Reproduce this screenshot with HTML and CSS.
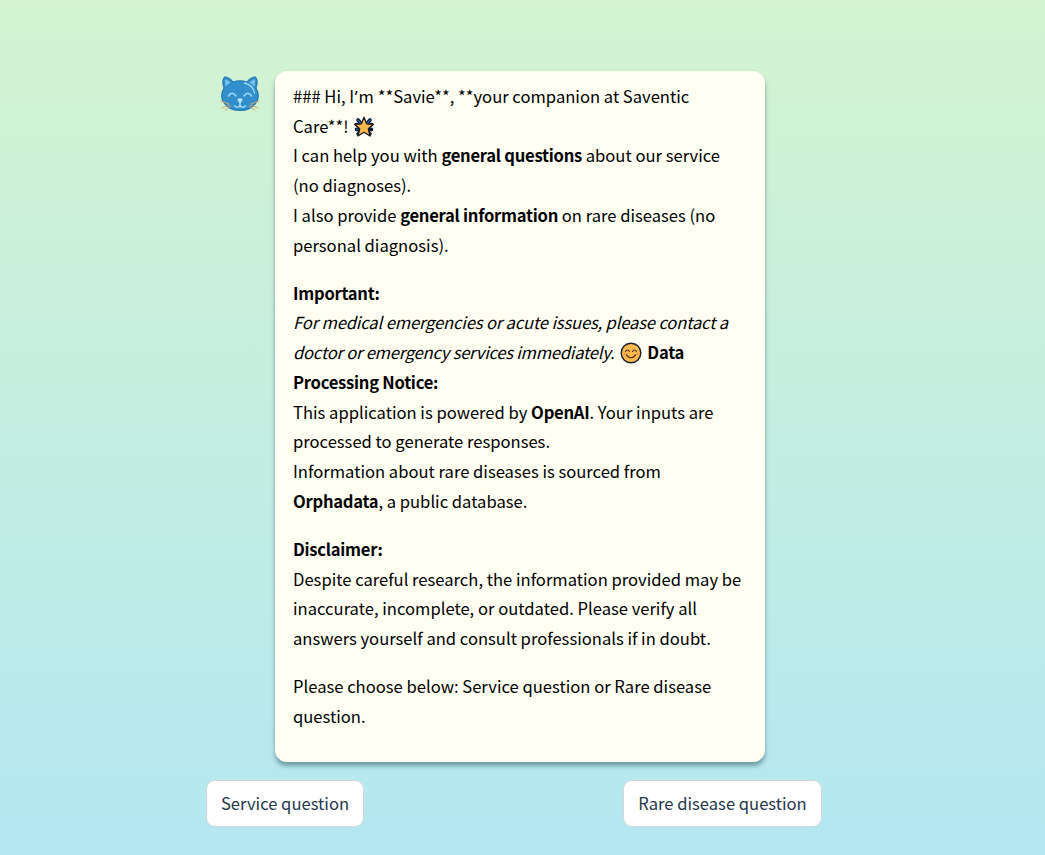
FILE: index.html
```html
<!DOCTYPE html>
<html lang="en">
<head>
<meta charset="utf-8">
<title>Savie – Saventic Care</title>
<link rel="stylesheet" href="styles.css">
</head>
<body>
<main class="chat">
  <div class="message">
    <svg class="avatar" viewBox="0 0 40 38" aria-hidden="true">
      <path d="M4 13Q2 8 3.500 4Q4.500 1 7.500 2.500Q11 4 13 7Q20 4.500 27 7Q29 4 32.500 2.500Q35.500 1 36.500 4Q38 8 36 13Q40 20 37 26Q32 35.500 20 35.500Q8 35.500 3 26Q0 20 4 13Z" fill="#318fcc" stroke="#2679b3" stroke-width="1.2"/>
      <path d="M5 5.500Q5 4 7 5Q9 6 10.500 7.500Q7 9.500 5.500 12ZM35 5.500Q35 4 33 5Q31 6 29.500 7.500Q33 9.500 34.500 12Z" fill="#79c3e8"/>
      <path d="M24.500 8Q33 10 34.500 18" fill="none" stroke="#a5dcf6" stroke-width="1.3" stroke-linecap="round"/>
      <path d="M8.500 21Q12 15.500 16 21M24 21Q28 15.500 31.500 21M14.500 31Q18 33.500 20 30.500Q22 33.500 25.500 31M20 26V30" fill="none" stroke="#a5dcf6" stroke-width="1.5" stroke-linecap="round"/>
      <path d="M18.500 24.500H21.500L20 27Z" fill="#c0e7fa" stroke="#c0e7fa" stroke-width="2" stroke-linejoin="round"/>
      <path d="M1 26 9 29M2 33 9.500 30M5 35.500 10.500 31.500M39 26 31 29M38 33 30.500 30M35 35.500 29.500 31.500" fill="none" stroke="#d3a86d" stroke-width="1" stroke-linecap="round"/>
    </svg>
    <article class="bubble">
      <p>### Hi, I<span class="apostrophe">’</span>m **Savie**, **your companion at Saventic<br>Care**! <svg class="star" viewBox="0 0 22 22" aria-hidden="true"><path d="M5 4 17 18M17 4 5 18M3.500 13.500 18.500 8.500M3.500 8.500 18.500 13.500" stroke="#071d36" stroke-width="3.600" stroke-linecap="round"/><path d="M5 4 17 18M17 4 5 18M3.500 13.500 18.500 8.500" stroke="#2b659c" stroke-width="1.200" stroke-linecap="round"/><path d="M11 1.200 13.600 7.800 20.500 8.300 15.300 12.800 17 20 11 16.300 5 20 6.700 12.800 1.500 8.300 8.400 7.800Z" fill="#ffb84d" stroke="#1b1820" stroke-width="1.300" stroke-linejoin="round"/></svg><br>I can help you with <b>general questions</b> about our service<br>(no diagnoses).<br>I also provide <b>general information</b> on rare diseases (no<br>personal diagnosis).</p>
      <p><b>Important:</b><br><em>For medical emergencies or acute issues, please contact a<br><span class="tight">doctor or emergency services immediately.</span></em> <svg class="smile" viewBox="0 0 22 22" aria-hidden="true"><circle cx="11" cy="11" r="9.800" fill="#ffb950" stroke="#18202b" stroke-width="1.400"/><path d="M5.500 9.500Q7.500 6.500 9.500 9.500M12.500 9.500Q14.500 6.500 16.500 9.500M6.500 13Q11 18.500 15.500 13" fill="none" stroke="#4d2f20" stroke-width="1.200" stroke-linecap="round"/><path d="M4 12H5.500M16.500 12H18" stroke="#e98545" stroke-width="1.500"/></svg> <b>Data<br>Processing Notice:</b><br>This application is powered by <b>OpenAI</b>. Your inputs are<br>processed to generate responses.<br>Information about rare diseases is sourced from<br><b>Orphadata</b>, a public database.</p>
      <p><b>Disclaimer:</b><br>Despite careful research, the information provided may be<br>inaccurate, incomplete, or outdated. Please verify all<br>answers yourself and consult professionals if in doubt.</p>
      <p>Please choose below: Service question or Rare disease<br>question.</p>
    </article>
  </div>
  <div class="choices">
    <button class="choice" type="button">Service question</button>
    <button class="choice choice-rare" type="button">Rare disease question</button>
  </div>
</main>
</body>
</html>
```
FILE: styles.css
```css
* { box-sizing: border-box; }
html { height: 100%; }
body {
  margin: 0;
  height: 855px;
  overflow: hidden;
  background: linear-gradient(#d4f4d0, #b3e7f2);
  color: #000;
  font-family: "Noto Sans CJK SC", "Noto Sans", sans-serif;
  font-size: 16.6px;
  line-height: 29.74px;
}
.chat { width: 616px; margin-left: 206px; padding-top: 71px; }
.message { display: flex; align-items: flex-start; gap: 15px; padding-left: 14px; }
.avatar { width: 40px; height: 38px; margin-top: 4px; flex: none; }
.bubble {
  width: 490px;
  height: 691px;
  flex: none;
  padding: 11px 18px;
  border-radius: 12px;
  background: #fffff4;
  box-shadow: 0 4px 4px rgba(49, 81, 100, .5);
  white-space: nowrap;
}
.bubble p { margin: 0 0 18.300px; }
.bubble b { font-weight: 600; letter-spacing: -.26px; }
.bubble em { letter-spacing: -.16px; }
.bubble .tight { letter-spacing: -.24px; }
.apostrophe { margin: 0 1px 0 .500px; font-family: "Noto Sans", sans-serif; line-height: 1; }
.star, .smile { width: 22px; height: 22px; vertical-align: -5px; }
.star { margin-left: 1px; }
.smile { margin: 0 1.500px 0 2px; }
.choices { display: flex; justify-content: space-between; margin-top: 18px; }
.choice {
  width: 158px;
  height: 47px;
  padding: 0;
  border: 1px solid #d7d6d6;
  border-radius: 9px;
  background: #fff;
  color: #25384c;
  font: inherit;
  white-space: nowrap;
}
.choice-rare { width: 199px; }
```
